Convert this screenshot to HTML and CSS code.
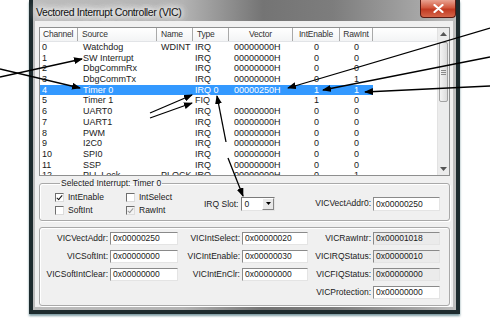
FILE: index.html
```html
<!DOCTYPE html>
<html lang="en">

<head>
  <meta charset="UTF-8">
  <title>Vectored Interrupt Controller (VIC)</title>
  <link rel="stylesheet" href="styles.css">
</head>

<body>

  <div class="window">
    <div class="titlebar">
      <span class="title">Vectored Interrupt Controller (VIC)</span>
      <span class="close">
        <svg width="11" height="9" viewBox="0 0 11 9"><path d="M1.5 1 L9.5 8 M9.5 1 L1.5 8" stroke="#fff" stroke-width="2.2" stroke-linecap="round"/></svg>
      </span>
    </div>

    <div class="client">
      <div class="listview">
        <div class="list-main">
          <div class="list-head">
            <span>Channel</span><span>Source</span><span>Name</span><span>Type</span>
            <span class="mid">Vector</span><span class="mid">IntEnable</span><span class="mid">RawInt</span><span class="fill"></span>
          </div>
          <div class="list-body">
            <div class="row"><span>0</span><span>Watchdog</span><span>WDINT</span><span>IRQ</span><span>00000000H</span><span>0</span><span>0</span></div>
            <div class="row"><span>1</span><span>SW Interrupt</span><span></span><span>IRQ</span><span>00000000H</span><span>0</span><span>0</span></div>
            <div class="row"><span>2</span><span>DbgCommRx</span><span></span><span>IRQ</span><span>00000000H</span><span>0</span><span>0</span></div>
            <div class="row"><span>3</span><span>DbgCommTx</span><span></span><span>IRQ</span><span>00000000H</span><span>0</span><span>1</span></div>
            <div class="row sel"><span>4</span><span>Timer 0</span><span></span><span>IRQ 0</span><span>00000250H</span><span>1</span><span>1</span></div>
            <div class="row"><span>5</span><span>Timer 1</span><span></span><span>FIQ</span><span></span><span>1</span><span>0</span></div>
            <div class="row"><span>6</span><span>UART0</span><span></span><span>IRQ</span><span>00000000H</span><span>0</span><span>0</span></div>
            <div class="row"><span>7</span><span>UART1</span><span></span><span>IRQ</span><span>00000000H</span><span>0</span><span>0</span></div>
            <div class="row"><span>8</span><span>PWM</span><span></span><span>IRQ</span><span>00000000H</span><span>0</span><span>0</span></div>
            <div class="row"><span>9</span><span>I2C0</span><span></span><span>IRQ</span><span>00000000H</span><span>0</span><span>0</span></div>
            <div class="row"><span>10</span><span>SPI0</span><span></span><span>IRQ</span><span>00000000H</span><span>0</span><span>0</span></div>
            <div class="row"><span>11</span><span>SSP</span><span></span><span>IRQ</span><span>00000000H</span><span>0</span><span>0</span></div>
            <div class="row"><span>12</span><span>PLL Lock</span><span>PLOCK</span><span>IRQ</span><span>00000000H</span><span>0</span><span>1</span></div>
          </div>
        </div>
        <div class="scrollbar">
          <span class="sb-btn"><svg width="7" height="4" viewBox="0 0 7 4"><path d="M0 4 L3.5 0 L7 4 z" fill="#555"/></svg></span>
          <div class="sb-track">
            <div class="sb-thumb"><i></i><i></i><i></i></div>
          </div>
          <span class="sb-btn"><svg width="7" height="4" viewBox="0 0 7 4"><path d="M0 0 L3.5 4 L7 0 z" fill="#555"/></svg></span>
        </div>
      </div>

      <fieldset class="group sel-group">
        <legend>Selected Interrupt: Timer 0</legend>
        <div class="sel-inner">
          <div class="checks">
            <span class="chk"><span class="cb on"></span>IntEnable</span>
            <span class="chk"><span class="cb"></span>IntSelect</span>
            <span class="chk"><span class="cb"></span>SoftInt</span>
            <span class="chk"><span class="cb on off"></span>RawInt</span>
          </div>
          <span class="slot-label">IRQ Slot:</span>
          <span class="select"><span class="select-val">0</span><span class="select-btn"><svg width="5" height="3" viewBox="0 0 5 3"><path d="M0 0 L2.5 3 L5 0 z" fill="#000"/></svg></span></span>
          <span class="reg-label vect0">VICVectAddr0:</span>
          <span class="box">0x00000250</span>
        </div>
      </fieldset>

      <fieldset class="group regs">
        <span class="reg-label">VICVectAddr:</span><span class="box">0x00000250</span>
        <span class="reg-label">VICIntSelect:</span><span class="box">0x00000020</span>
        <span class="reg-label">VICRawIntr:</span><span class="box ro">0x00001018</span>

        <span class="reg-label">VICSoftInt:</span><span class="box">0x00000000</span>
        <span class="reg-label">VICIntEnable:</span><span class="box">0x00000030</span>
        <span class="reg-label">VICIRQStatus:</span><span class="box ro">0x00000010</span>

        <span class="reg-label">VICSoftIntClear:</span><span class="box">0x00000000</span>
        <span class="reg-label">VICIntEnClr:</span><span class="box">0x00000000</span>
        <span class="reg-label">VICFIQStatus:</span><span class="box ro">0x00000000</span>

        <span class="reg-label last">VICProtection:</span><span class="box">0x00000000</span>
      </fieldset>
    </div>
  </div>

  <!-- callout arrows drawn over the screenshot -->
  <svg class="callouts" width="490" height="318" viewBox="0 0 490 318">
    <defs>
      <marker id="head" markerUnits="userSpaceOnUse" markerWidth="9" markerHeight="7" refX="8" refY="3.5" orient="auto">
        <path d="M0 0 L9 3.5 L0 7 z" fill="#000"/>
      </marker>
    </defs>
    <g stroke="#000" stroke-width="1.3" marker-end="url(#head)">
      <line x1="0" y1="77" x2="82" y2="59"/>
      <line x1="0" y1="69" x2="80" y2="88"/>
      <line x1="150" y1="113" x2="192" y2="95"/>
      <line x1="150" y1="118" x2="192" y2="103"/>
      <line x1="226" y1="142" x2="217" y2="96"/>
      <line x1="228" y1="158" x2="243" y2="196"/>
      <line x1="490" y1="28" x2="288" y2="88"/>
      <line x1="490" y1="57" x2="323" y2="90"/>
      <line x1="490" y1="86" x2="365" y2="92"/>
    </g>
  </svg>

</body>

</html>
```

FILE: styles.css
```css
* {
  box-sizing: border-box;
}

body {
  margin: 0;
  width: 490px;
  height: 318px;
  overflow: hidden;
  position: relative;
  background: #fff;
  font-family: "Liberation Sans", Arial, sans-serif;
  color: #1a1a1a;
}

.window {
  margin-left: 29px;
  width: 431px;
  height: 314px;
  padding: 0 3px 3px 2px;
  display: flex;
  flex-direction: column;
  border: 4px solid #1d2b2e;
  border-top: none;
  background: linear-gradient(to right, #bdbdbd 0, #b3b3b3 150px, #747474 230px, #7d7d7d 300px, #a8a8a8 390px, #c4c4c4 431px);
  box-shadow: 0 2px 2px rgba(40, 90, 100, 0.6);
}

.titlebar {
  height: 21px;
  display: flex;
  justify-content: space-between;
  align-items: flex-start;
}

.title {
  margin: 6px 0 0 1px;
  font-size: 10.5px;
  line-height: 12px;
  letter-spacing: -0.4px;
  color: #111;
  text-shadow: 0 0 4px #fff, 0 0 8px #fff, 0 0 10px #fff, 0 0 12px #fff;
}

.close {
  width: 36px;
  height: 18px;
  margin-right: -3px;
  display: flex;
  align-items: center;
  justify-content: center;
  border: 1px solid #5a1a12;
  border-top: none;
  border-radius: 0 0 4px 4px;
  background: linear-gradient(#e9a291, #d2593f 45%, #c13a22 55%, #d5654a);
}

.client {
  flex: 1;
  padding: 6px 3px 0 4px;
  background: #f0f0f0;
}

/* list view */
.listview {
  display: flex;
  height: 149px;
  border: 1px solid #8e8f8f;
  background: #fff;
}

.list-main {
  flex: 1;
  overflow: hidden;
}

.list-head {
  display: grid;
  grid-template-columns: 38px 79px 36px 36px 64px 47px 33px 1fr;
  height: 14px;
  background: linear-gradient(#fff, #f3f4f5);
  border-bottom: 1px solid #e2e4e7;
}

.list-head span {
  padding-left: 4px;
  font-size: 8.5px;
  line-height: 13px;
  letter-spacing: -0.2px;
  color: #333;
  white-space: nowrap;
  overflow: hidden;
  border-right: 1px solid #a9a9a9;
}

.list-head span:first-child {
  padding-left: 3px;
}

.list-head span.mid {
  padding-left: 0;
  text-align: center;
}

.list-head span.fill {
  border-right: none;
}

.list-body {
  height: 133px;
  overflow: hidden;
}

.row {
  display: grid;
  grid-template-columns: 38px 79px 36px 36px 64px 47px 33px;
  width: 333px;
  height: 10.7px;
  font-size: 9px;
  line-height: 10.7px;
  color: #1a1a1a;
}

.row span {
  white-space: nowrap;
  overflow: hidden;
}

.row span:nth-child(1) { padding-left: 2px; }
.row span:nth-child(2) { padding-left: 5px; }
.row span:nth-child(3) { padding-left: 4px; }
.row span:nth-child(4) { padding-left: 2px; }
.row span:nth-child(5) { padding-left: 5px; }
.row span:nth-child(6),
.row span:nth-child(7) { text-align: center; }

.row.sel {
  background: #3399ff;
  color: #fff;
}

.scrollbar {
  width: 12px;
  display: flex;
  flex-direction: column;
  background: #ececec;
  border-left: 1px solid #e2e2e2;
}

.sb-btn {
  height: 12px;
  display: flex;
  align-items: center;
  justify-content: center;
}

.sb-track {
  flex: 1;
  padding: 2px 1px;
}

.sb-thumb {
  height: 60px;
  display: flex;
  flex-direction: column;
  align-items: center;
  justify-content: center;
  gap: 1px;
  border: 1px solid #a2a2a2;
  border-radius: 2px;
  background: linear-gradient(to right, #f4f4f4, #dcdcdc);
}

.sb-thumb i {
  width: 5px;
  height: 1px;
  background: #8a8a8a;
}

/* group boxes */
.group {
  margin: 0;
  border: 1px solid #a9a9a9;
  border-radius: 3px;
  box-shadow: inset 1px 1px 0 #fff, 1px 1px 0 #fff;
  font-size: 8.5px;
}

.group legend {
  margin-left: 5px;
  padding: 0 1px;
  line-height: 11px;
  color: #1a1a1a;
}

.sel-group {
  margin-top: 1.5px;
  padding: 2px 9px 3px 15px;
}

.sel-inner {
  display: flex;
  align-items: center;
}

.checks {
  display: grid;
  grid-template-columns: 71px 78px;
  grid-auto-rows: 13px;
}

.chk {
  display: flex;
  align-items: center;
  gap: 4px;
}

.cb {
  width: 9px;
  height: 9px;
  border: 1px solid;
  border-color: #6e6e6e #dcdcdc #dcdcdc #6e6e6e;
  background: #fff;
  position: relative;
}

.cb.on::after {
  content: "";
  position: absolute;
  left: 2px;
  top: 0;
  width: 2px;
  height: 5px;
  border: solid #111;
  border-width: 0 1.5px 1.5px 0;
  transform: rotate(40deg);
}

.cb.off {
  background: #f3f3f3;
}

.cb.off::after {
  border-color: #9a9a9a;
}

.slot-label {
  margin-right: 3px;
  white-space: nowrap;
}

.select {
  width: 34px;
  height: 14px;
  display: flex;
  border: 1px solid;
  border-color: #7a7a7a #e4e4e4 #e4e4e4 #7a7a7a;
  background: #fff;
}

.select-val {
  flex: 1;
  padding-left: 2px;
  line-height: 12px;
}

.select-btn {
  width: 12px;
  display: flex;
  align-items: center;
  justify-content: center;
  border: 1px solid;
  border-color: #fff #858585 #858585 #fff;
  background: #e8e8e8;
}

.reg-label {
  text-align: right;
  line-height: 13px;
  white-space: nowrap;
}

.vect0 {
  margin-left: auto;
  margin-right: 2px;
}

.box {
  height: 13px;
  padding-left: 2px;
  line-height: 11px;
  border: 1px solid;
  border-color: #8a8a8a #e4e4e4 #e4e4e4 #8a8a8a;
  background: #fff;
  white-space: nowrap;
}

.sel-inner .box {
  width: 67px;
  height: 14px;
  line-height: 12px;
}

.box.ro {
  background: #ebebeb;
}

.regs {
  margin-top: 6px;
  height: 79px;
  padding: 4px 0 0 0;
  display: grid;
  grid-template-columns: 68px 68px 60px 66px 61px 67px;
  grid-auto-rows: 13px;
  column-gap: 2px;
  row-gap: 5px;
  align-content: start;
}

.regs .last {
  grid-column: 5;
}

.callouts {
  position: absolute;
  left: 0;
  top: 0;
  pointer-events: none;
}
```
